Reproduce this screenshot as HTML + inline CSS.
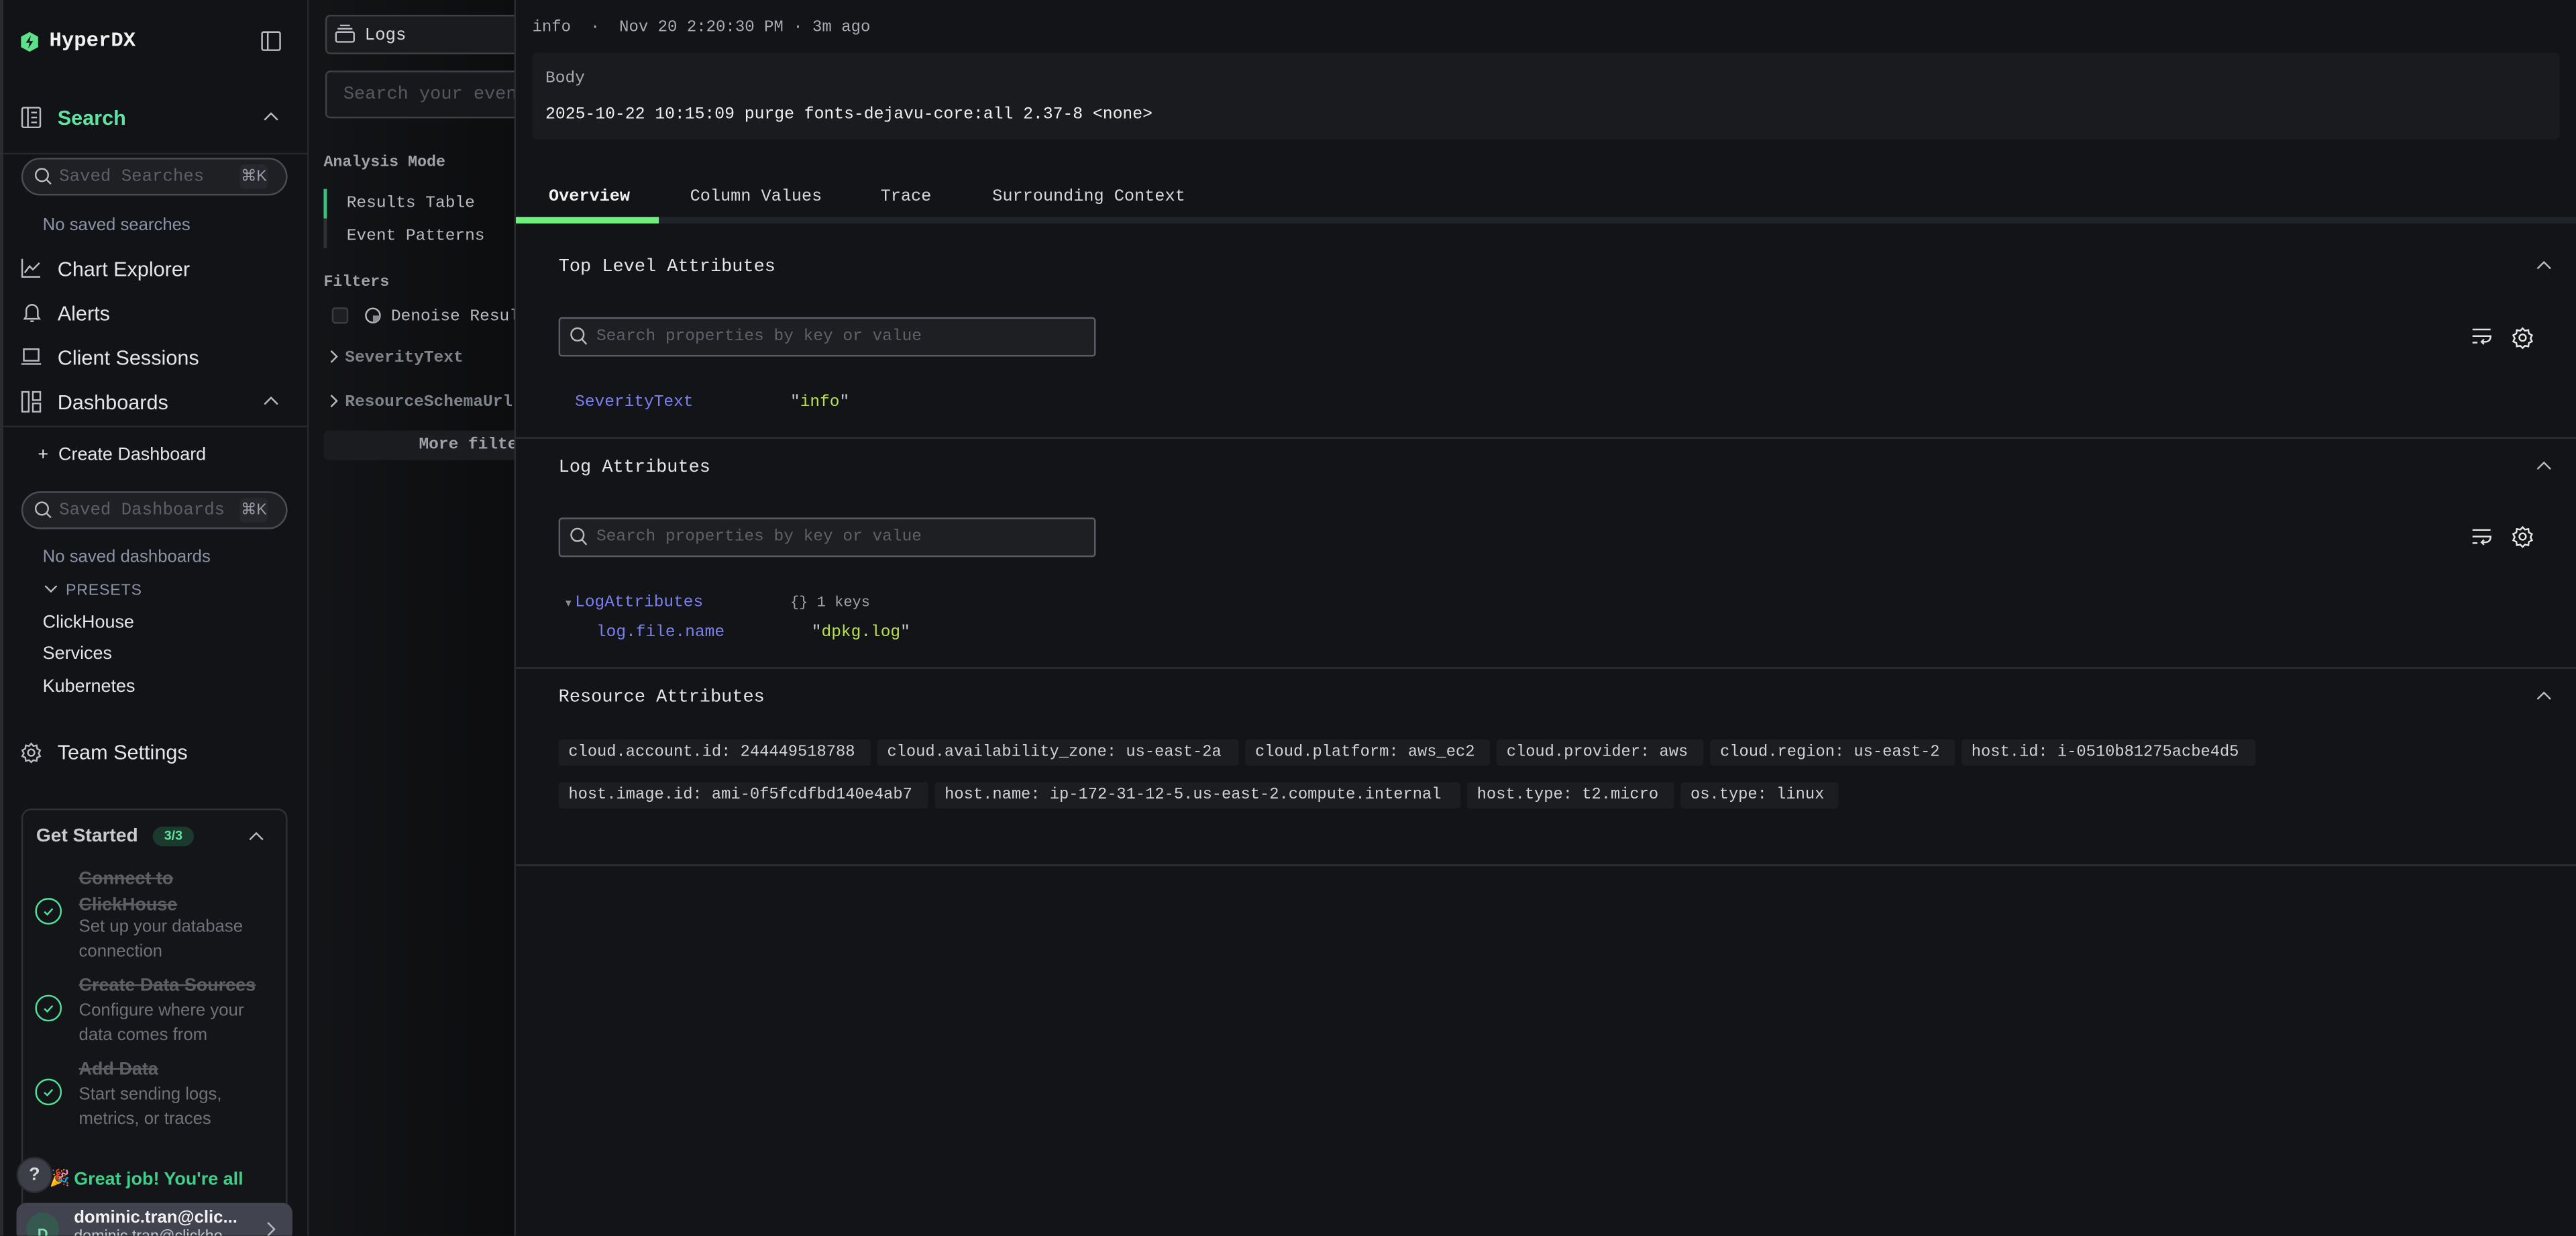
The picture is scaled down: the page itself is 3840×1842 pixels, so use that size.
<!DOCTYPE html>
<html><head><meta charset="utf-8">
<style>
*{box-sizing:border-box;margin:0;padding:0}
html,body{width:3840px;height:1840px;overflow:hidden;background:#121316}
#w{position:absolute;left:0;top:0;width:1568px;height:752px;transform:scale(2.44898);transform-origin:0 0;background:#121316;color:#d8d9dc;font-family:"Liberation Sans",sans-serif;overflow:hidden}
.a{position:absolute;white-space:nowrap}
.m{font-family:"Liberation Mono",monospace}
svg{position:absolute;overflow:visible}
.nav{font-size:12.5px;color:#e4e5e8}
.ico{stroke:#b8bbc2;fill:none;stroke-width:1}
.chip{position:absolute;height:16px;background:#1c1d21;border-radius:2px;font-family:"Liberation Mono",monospace;font-size:9.7px;color:#d0d2d6;line-height:16px;padding:0 6px;white-space:nowrap;overflow:hidden}
</style></head><body><div id="w">

<!-- Sidebar -->
<div class="a" style="left:0;top:0;width:188px;height:752px;background:#121316;border-right:1px solid #26282c"></div>
<div class="a" style="left:0;top:0;width:2px;height:752px;background:#2a2c30"></div>
<svg style="left:12px;top:19px" width="12" height="13" viewBox="0 0 12 13"><path d="M6 0.5 L11.2 3.3 V9.7 L6 12.5 L0.8 9.7 V3.3Z" fill="#5fe08a"/><path d="M6.8 2.5 L3.8 7 H6 L5.2 10.5 L8.2 6 H6Z" fill="#121316"/></svg>
<div class="a m" style="left:30px;top:18px;font-size:12.5px;font-weight:bold;color:#f2f2f2">HyperDX</div>
<svg style="left:159px;top:19px" width="12" height="12"><rect x="0.5" y="0.5" width="11" height="11" rx="1" class="ico"/><line x1="4" y1="0.5" x2="4" y2="11.5" class="ico"/></svg>

<svg style="left:13px;top:65px" width="12" height="13"><rect x="0.5" y="0.5" width="11" height="12" rx="1" class="ico"/><line x1="4" y1="0.5" x2="4" y2="12.5" class="ico"/><path d="M6 3.5h3.5M6 6.5h3.5M6 9.5h3.5" class="ico"/></svg>
<div class="a" style="left:35px;top:65px;font-size:12.5px;font-weight:bold;color:#5fe3a1">Search</div>
<svg style="left:160px;top:68px" width="10" height="6"><path d="M1 5 L5 1 L9 5" class="ico"/></svg>
<div class="a" style="left:2px;top:93px;width:186px;height:1px;background:#26282c"></div>

<div class="a" style="left:13px;top:96px;width:162px;height:23px;border:1px solid #4a4d55;border-radius:12px;background:#1f2024"></div>
<svg style="left:21px;top:102px" width="11" height="11"><circle cx="4.5" cy="4.5" r="3.8" class="ico" stroke="#8a8d95"/><path d="M7.3 7.3 L10 10" class="ico" stroke="#8a8d95"/></svg>
<div class="a m" style="left:36px;top:102px;font-size:10.5px;color:#5c5f67">Saved Searches</div>
<div class="a" style="left:146px;top:100px;width:17px;height:15px;background:#26282d;border-radius:3px;font-size:9.5px;color:#9a9da5;text-align:center;line-height:15px">⌘K</div>
<div class="a" style="left:26px;top:131px;font-size:10.5px;color:#8a93a6">No saved searches</div>

<svg style="left:13px;top:157px" width="12" height="12"><path d="M0.5 0.5 V11.5 H11.5 M2 9 L5 5 L7 7 L11 3" class="ico"/></svg>
<div class="a nav" style="left:35px;top:157px">Chart Explorer</div>
<svg style="left:14px;top:184px" width="11" height="13"><path d="M1 10 H10 L9 8.5 V5 A3.5 3.5 0 0 0 2 5 V8.5Z M4.5 11.5 H6.5" class="ico"/></svg>
<div class="a nav" style="left:35px;top:184px">Alerts</div>
<svg style="left:13px;top:212px" width="12" height="11"><rect x="1.5" y="0.5" width="9" height="7" class="ico"/><path d="M0 9.5 H12" class="ico"/></svg>
<div class="a nav" style="left:35px;top:211px">Client Sessions</div>
<svg style="left:13px;top:238px" width="12" height="13"><rect x="0.5" y="0.5" width="4" height="12" class="ico"/><rect x="7" y="0.5" width="4.5" height="5" class="ico"/><rect x="7" y="7.5" width="4.5" height="5" class="ico"/></svg>
<div class="a nav" style="left:35px;top:238px">Dashboards</div>
<svg style="left:160px;top:241px" width="10" height="6"><path d="M1 5 L5 1 L9 5" class="ico"/></svg>
<div class="a" style="left:2px;top:259px;width:186px;height:1px;background:#26282c"></div>
<div class="a" style="left:23px;top:271px;font-size:11px;color:#e4e5e8">+ &nbsp;Create Dashboard</div>

<div class="a" style="left:13px;top:299px;width:162px;height:23px;border:1px solid #4a4d55;border-radius:12px;background:#1f2024"></div>
<svg style="left:21px;top:305px" width="11" height="11"><circle cx="4.5" cy="4.5" r="3.8" class="ico" stroke="#8a8d95"/><path d="M7.3 7.3 L10 10" class="ico" stroke="#8a8d95"/></svg>
<div class="a m" style="left:36px;top:305px;font-size:10.5px;color:#5c5f67">Saved Dashboards</div>
<div class="a" style="left:146px;top:303px;width:17px;height:15px;background:#26282d;border-radius:3px;font-size:9.5px;color:#9a9da5;text-align:center;line-height:15px">⌘K</div>
<div class="a" style="left:26px;top:333px;font-size:10.5px;color:#8a93a6">No saved dashboards</div>
<svg style="left:27px;top:356px" width="8" height="5"><path d="M0.5 0.5 L4 4 L7.5 0.5" class="ico" stroke="#8a93a6"/></svg>
<div class="a" style="left:40px;top:354px;font-size:9.5px;color:#8a93a6;letter-spacing:0.3px">PRESETS</div>
<div class="a" style="left:26px;top:373px;font-size:11px;color:#e4e5e8">ClickHouse</div>
<div class="a" style="left:26px;top:392px;font-size:11px;color:#e4e5e8">Services</div>
<div class="a" style="left:26px;top:412px;font-size:11px;color:#e4e5e8">Kubernetes</div>
<svg style="left:13px;top:452px" width="12" height="12"><circle cx="6" cy="6" r="2" class="ico"/><path d="M6 0.5 L7.3 2 L9.3 1.6 L9.6 3.6 L11.4 4.6 L10.5 6.4 L11.4 8.2 L9.6 9 L9.3 11 L7.3 10.6 L6 11.8 L4.7 10.6 L2.7 11 L2.4 9 L0.6 8.2 L1.5 6.4 L0.6 4.6 L2.4 3.6 L2.7 1.6 L4.7 2Z" class="ico"/></svg>
<div class="a nav" style="left:35px;top:451px">Team Settings</div>

<div class="a" style="left:13px;top:492px;width:162px;height:270px;border:1px solid #2e3035;border-radius:6px;background:#141518"></div>
<div class="a" style="left:22px;top:503px;font-size:11.5px;font-weight:bold;color:#c8cacf">Get Started</div>
<div class="a" style="left:93px;top:503px;width:25px;height:12px;background:#1b3a2d;border-radius:6px;font-size:8px;font-weight:bold;color:#5fe3a1;text-align:center;line-height:12px">3/3</div>
<svg style="left:151px;top:506px" width="10" height="6"><path d="M1 5 L5 1 L9 5" class="ico" stroke="#8a8d95"/></svg>
<svg style="left:21px;top:546px" width="17" height="17"><circle cx="8.5" cy="8.5" r="7.6" stroke="#4fe39a" fill="none" stroke-width="1"/><path d="M6 8.8 L7.8 10.5 L11 7" stroke="#4fe39a" fill="none"/></svg>
<div class="a" style="left:48px;top:527px;font-size:11px;font-weight:bold;color:#5d5f65;text-decoration:line-through;line-height:16px;white-space:normal;width:80px">Connect to ClickHouse</div>
<div class="a" style="left:48px;top:557px;font-size:10.5px;color:#6f7279;line-height:14.5px;white-space:normal;width:120px">Set up your database connection</div>
<svg style="left:21px;top:605px" width="17" height="17"><circle cx="8.5" cy="8.5" r="7.6" stroke="#4fe39a" fill="none" stroke-width="1"/><path d="M6 8.8 L7.8 10.5 L11 7" stroke="#4fe39a" fill="none"/></svg>
<div class="a" style="left:48px;top:594px;font-size:11px;font-weight:bold;color:#5d5f65;text-decoration:line-through">Create Data Sources</div>
<div class="a" style="left:48px;top:608px;font-size:10.5px;color:#6f7279;line-height:14.5px;white-space:normal;width:120px">Configure where your data comes from</div>
<svg style="left:21px;top:656px" width="17" height="17"><circle cx="8.5" cy="8.5" r="7.6" stroke="#4fe39a" fill="none" stroke-width="1"/><path d="M6 8.8 L7.8 10.5 L11 7" stroke="#4fe39a" fill="none"/></svg>
<div class="a" style="left:48px;top:645px;font-size:11px;font-weight:bold;color:#5d5f65;text-decoration:line-through">Add Data</div>
<div class="a" style="left:48px;top:659px;font-size:10.5px;color:#6f7279;line-height:14.5px;white-space:normal;width:120px">Start sending logs, metrics, or traces</div>
<div class="a" style="left:30px;top:712px;font-size:10px">🎉</div>
<div class="a" style="left:45px;top:712px;font-size:11px;font-weight:bold;color:#3fcf8a">Great job! You're all</div>
<div class="a" style="left:10px;top:704px;width:22px;height:22px;border-radius:11px;background:#3c3e48;border:1px solid #2a2c32;color:#d8d9dc;font-size:11px;font-weight:bold;text-align:center;line-height:20px">?</div>
<div class="a" style="left:10px;top:732px;width:168px;height:24px;background:#41434f;border-radius:6px"></div>
<div class="a" style="left:16px;top:738px;width:20px;height:20px;border-radius:10px;background:#35584f;color:#7fe0b0;font-size:9px;font-weight:bold;text-align:center;line-height:20px;padding-top:3px">D</div>
<div class="a" style="left:45px;top:735px;font-size:10.5px;font-weight:bold;color:#f2f2f2">dominic.tran@clic...</div>
<div class="a" style="left:45px;top:747px;font-size:9.5px;color:#c8cacf">dominic.tran@clickho</div>
<svg style="left:162px;top:743px" width="6" height="10"><path d="M1 1 L5 5 L1 9" class="ico" stroke="#8a8d95"/></svg>

<!-- Middle panel -->
<div class="a" style="left:188px;top:0;width:126px;height:752px;background:linear-gradient(90deg,#131417,#0c0d0f)"></div>
<div class="a" style="left:198px;top:9px;width:130px;height:24px;border:1px solid #3e4047;border-radius:3px;background:#1a1b1f"></div>
<svg style="left:204px;top:15px" width="12" height="11"><path d="M3 0.5 H9 M1.5 2.5 H10.5" class="ico" stroke="#9a9da5"/><rect x="0.5" y="4.5" width="11" height="6" rx="1" class="ico" stroke="#9a9da5"/></svg>
<div class="a m" style="left:222px;top:16px;font-size:10.5px;color:#d8d9dc">Logs</div>
<div class="a" style="left:198px;top:43px;width:130px;height:29px;border:1px solid #3e4047;border-radius:3px;background:#17181c"></div>
<div class="a m" style="left:209px;top:52px;font-size:11px;color:#55585f">Search your events</div>
<div class="a m" style="left:197px;top:93px;font-size:9.5px;font-weight:bold;color:#9fa2a9">Analysis Mode</div>
<div class="a" style="left:197px;top:115px;width:2px;height:18px;background:#3fbf7f"></div>
<div class="a" style="left:197px;top:133px;width:2px;height:18px;background:#2e3035"></div>
<div class="a m" style="left:211px;top:119px;font-size:10px;color:#b8bbc2">Results Table</div>
<div class="a m" style="left:211px;top:139px;font-size:10px;color:#b8bbc2">Event Patterns</div>
<div class="a m" style="left:197px;top:166px;font-size:9.5px;font-weight:bold;color:#9fa2a9">Filters</div>
<div class="a" style="left:202px;top:187px;width:10px;height:10px;border:1px solid #3a3c42;border-radius:2px;background:#1e1f23"></div>
<svg style="left:222px;top:187px" width="10" height="10"><circle cx="5" cy="5" r="4.3" class="ico" stroke="#b8bbc2"/><path d="M5 9.3 A4.3 4.3 0 0 0 9.3 5 L5 5Z" fill="#8a8d95"/></svg>
<div class="a m" style="left:238px;top:188px;font-size:10px;color:#b8bbc2">Denoise Results</div>
<svg style="left:201px;top:213px" width="5" height="8"><path d="M0.5 0.5 L4 4 L0.5 7.5" class="ico" stroke="#b8bbc2"/></svg>
<div class="a m" style="left:210px;top:213px;font-size:10px;font-weight:bold;color:#7f838b">SeverityText</div>
<svg style="left:201px;top:240px" width="5" height="8"><path d="M0.5 0.5 L4 4 L0.5 7.5" class="ico" stroke="#b8bbc2"/></svg>
<div class="a m" style="left:210px;top:240px;font-size:10px;font-weight:bold;color:#7f838b">ResourceSchemaUrl</div>
<div class="a" style="left:197px;top:262px;width:130px;height:18px;background:#1b1c20;border-radius:3px"></div>
<div class="a m" style="left:255px;top:266px;font-size:10px;font-weight:bold;color:#9fa2a9">More filters</div>

<!-- Drawer -->
<div class="a" style="left:313px;top:0;width:1255px;height:752px;background:#131417;border-left:1px solid #2a2c31"></div>
<div class="a m" style="left:324px;top:11px;font-size:9.8px;color:#a8abb2">info &nbsp;· &nbsp;Nov 20 2:20:30 PM · 3m ago</div>
<div class="a" style="left:324px;top:32px;width:1234px;height:53px;background:#1a1b1e;border-radius:3px"></div>
<div class="a m" style="left:332px;top:43px;font-size:10px;color:#a8abb2">Body</div>
<div class="a m" style="left:332px;top:65px;font-size:10.1px;color:#f0f0f0">2025-10-22 10:15:09 purge fonts-dejavu-core:all 2.37-8 &lt;none&gt;</div>
<div class="a m" style="left:334px;top:114px;font-size:10.3px;font-weight:bold;color:#f2f2f2">Overview</div>
<div class="a m" style="left:420px;top:114px;font-size:10.3px;color:#d8d9dc">Column Values</div>
<div class="a m" style="left:536px;top:114px;font-size:10.3px;color:#d8d9dc">Trace</div>
<div class="a m" style="left:604px;top:114px;font-size:10.3px;color:#d8d9dc">Surrounding Context</div>
<div class="a" style="left:314px;top:132px;width:1254px;height:4px;background:#1f2428"></div>
<div class="a" style="left:314px;top:132px;width:87px;height:4px;background:#6ef07a"></div>

<div class="a m" style="left:340px;top:157px;font-size:11px;color:#e4e5e8">Top Level Attributes</div>
<svg style="left:1544px;top:159px" width="9" height="5"><path d="M0.5 4.5 L4.5 0.5 L8.5 4.5" class="ico" stroke="#a8abb2"/></svg>
<div class="a" style="left:340px;top:193px;width:327px;height:24px;border:1px solid #5a5d65;border-radius:2px;background:#1e1f23"></div>
<svg style="left:347px;top:199px" width="11" height="12"><circle cx="4.5" cy="4.5" r="3.8" class="ico" stroke="#8a8d95"/><path d="M7.3 7.5 L10 10.5" class="ico" stroke="#8a8d95"/></svg>
<div class="a m" style="left:363px;top:200px;font-size:10px;color:#5e6168">Search properties by key or value</div>
<svg style="left:1505px;top:200px" width="11" height="10"><path d="M0 0.5 H11 M0 4.5 H11 Q11 8 7.5 8 H5.5 M7 6.5 L5.5 8 L7 9.5 M0 8.5 H3" stroke="#e0e0e0" fill="none"/></svg>
<svg style="left:1529px;top:199px" width="13" height="13"><circle cx="6.5" cy="6.5" r="2" stroke="#e8e8e8" fill="none"/><path d="M6.5 0.8 L7.9 2.3 L10 1.9 L10.3 4 L12.2 5 L11.3 6.9 L12.2 8.8 L10.3 9.7 L10 11.8 L7.9 11.4 L6.5 12.8 L5.1 11.4 L3 11.8 L2.7 9.7 L0.8 8.8 L1.7 6.9 L0.8 5 L2.7 4 L3 1.9 L5.1 2.3Z" stroke="#e8e8e8" fill="none"/></svg>
<div class="a m" style="left:350px;top:240px;font-size:10px;color:#7b7ff0">SeverityText</div>
<div class="a m" style="left:481px;top:240px;font-size:10px;color:#c8cacf">"<span style="color:#b8e04a">info</span>"</div>
<div class="a" style="left:314px;top:266px;width:1254px;height:1px;background:#2e3035"></div>

<div class="a m" style="left:340px;top:279px;font-size:11px;color:#e4e5e8">Log Attributes</div>
<svg style="left:1544px;top:281px" width="9" height="5"><path d="M0.5 4.5 L4.5 0.5 L8.5 4.5" class="ico" stroke="#a8abb2"/></svg>
<div class="a" style="left:340px;top:315px;width:327px;height:24px;border:1px solid #5a5d65;border-radius:2px;background:#1e1f23"></div>
<svg style="left:347px;top:321px" width="11" height="12"><circle cx="4.5" cy="4.5" r="3.8" class="ico" stroke="#8a8d95"/><path d="M7.3 7.5 L10 10.5" class="ico" stroke="#8a8d95"/></svg>
<div class="a m" style="left:363px;top:322px;font-size:10px;color:#5e6168">Search properties by key or value</div>
<svg style="left:1505px;top:322px" width="11" height="10"><path d="M0 0.5 H11 M0 4.5 H11 Q11 8 7.5 8 H5.5 M7 6.5 L5.5 8 L7 9.5 M0 8.5 H3" stroke="#e0e0e0" fill="none"/></svg>
<svg style="left:1529px;top:320px" width="13" height="13"><circle cx="6.5" cy="6.5" r="2" stroke="#e8e8e8" fill="none"/><path d="M6.5 0.8 L7.9 2.3 L10 1.9 L10.3 4 L12.2 5 L11.3 6.9 L12.2 8.8 L10.3 9.7 L10 11.8 L7.9 11.4 L6.5 12.8 L5.1 11.4 L3 11.8 L2.7 9.7 L0.8 8.8 L1.7 6.9 L0.8 5 L2.7 4 L3 1.9 L5.1 2.3Z" stroke="#e8e8e8" fill="none"/></svg>
<div class="a" style="left:343px;top:365px;font-size:6px;color:#8a8d95">▼</div>
<div class="a m" style="left:350px;top:362px;font-size:10px;color:#7b7ff0">LogAttributes</div>
<div class="a m" style="left:481px;top:362px;font-size:9px;color:#9fa2a9">{} 1 keys</div>
<div class="a m" style="left:363px;top:380px;font-size:10px;color:#7b7ff0">log.file.name</div>
<div class="a m" style="left:494px;top:380px;font-size:10px;color:#c8cacf">"<span style="color:#b8e04a">dpkg.log</span>"</div>
<div class="a" style="left:314px;top:406px;width:1254px;height:1px;background:#2e3035"></div>

<div class="a m" style="left:340px;top:419px;font-size:11px;color:#e4e5e8">Resource Attributes</div>
<svg style="left:1544px;top:421px" width="9" height="5"><path d="M0.5 4.5 L4.5 0.5 L8.5 4.5" class="ico" stroke="#a8abb2"/></svg>
<div class="chip" style="left:340px;top:450px;width:190px">cloud.account.id: 244449518788</div>
<div class="chip" style="left:534px;top:450px;width:220px">cloud.availability_zone: us-east-2a</div>
<div class="chip" style="left:758px;top:450px;width:149px">cloud.platform: aws_ec2</div>
<div class="chip" style="left:911px;top:450px;width:126px">cloud.provider: aws</div>
<div class="chip" style="left:1041px;top:450px;width:149px">cloud.region: us-east-2</div>
<div class="chip" style="left:1194px;top:450px;width:179px">host.id: i-0510b81275acbe4d5</div>
<div class="chip" style="left:340px;top:476px;width:225px">host.image.id: ami-0f5fcdfbd140e4ab7</div>
<div class="chip" style="left:569px;top:476px;width:320px">host.name: ip-172-31-12-5.us-east-2.compute.internal</div>
<div class="chip" style="left:893px;top:476px;width:126px">host.type: t2.micro</div>
<div class="chip" style="left:1023px;top:476px;width:96px">os.type: linux</div>
<div class="a" style="left:314px;top:526px;width:1254px;height:1px;background:#2e3035"></div>

</div></body></html>
